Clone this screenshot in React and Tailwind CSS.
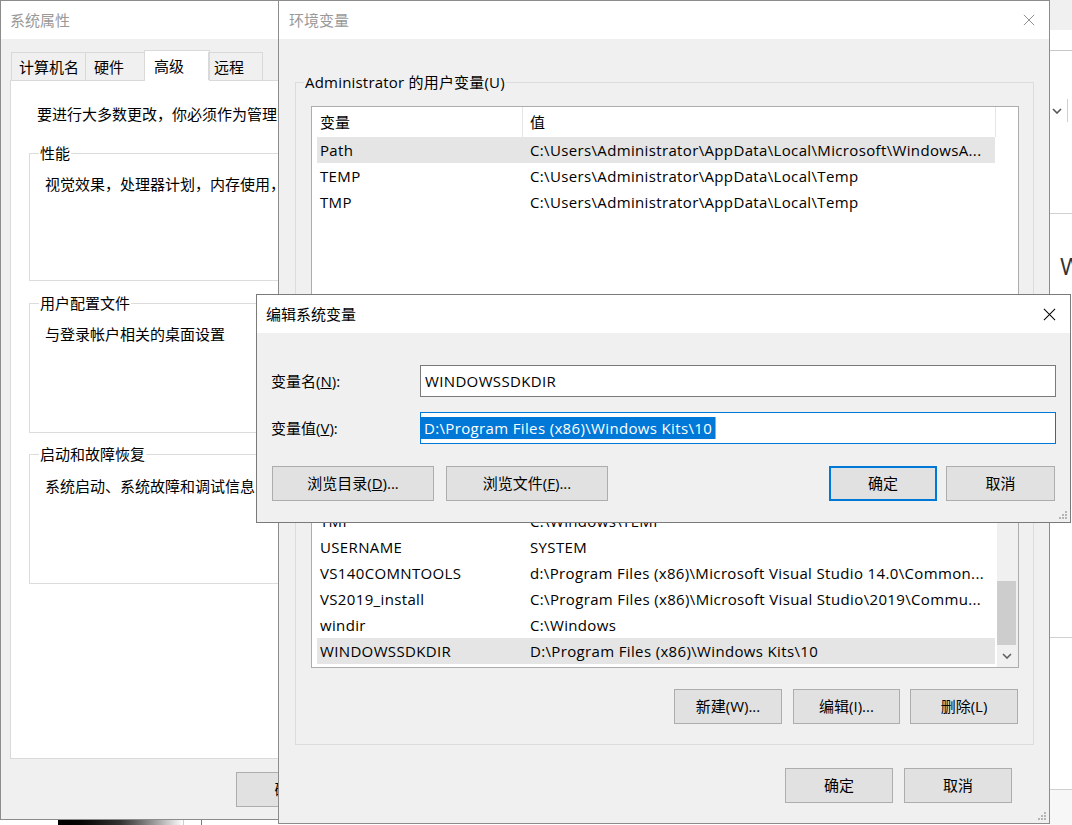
import React from 'react';

const Btn = ({ className = '', primary = false, children }) => (
  <div
    className={`flex h-[35px] items-center justify-center bg-[#e1e1e1] text-[15px] leading-none text-black ${
      primary ? 'border-2 border-[#0078d7]' : 'border border-[#adadad]'
    } ${className}`}
  >
    {children}
  </div>
);

const CloseIcon = ({ className }) => (
  <svg viewBox="0 0 14 14" className={className} fill="none" stroke="currentColor" strokeWidth="1.1">
    <path d="M1 1 13 13M13 1 1 13" />
  </svg>
);

const Chevron = ({ className }) => (
  <svg viewBox="0 0 10 6" className={className} fill="none" stroke="currentColor" strokeWidth="1.6">
    <path d="M1 1l4 4 4-4" />
  </svg>
);

const Grip = ({ className }) => (
  <svg viewBox="0 0 9 9" className={className}>
    <g fill="#b5b5b5">
      <rect x="7" y="1" width="2" height="2" />
      <rect x="4" y="4" width="2" height="2" />
      <rect x="7" y="4" width="2" height="2" />
      <rect x="1" y="7" width="2" height="2" />
      <rect x="4" y="7" width="2" height="2" />
      <rect x="7" y="7" width="2" height="2" />
    </g>
  </svg>
);

// one row of a list view: name column + value column
const VarRow = ({ name, value, selected }) => (
  <div
    className={`ml-[5px] flex h-[26px] w-[678px] shrink-0 items-center whitespace-nowrap tracking-[0.35px] ${
      selected ? 'bg-[#e5e5e5]' : ''
    }`}
  >
    <div className="w-[205px] overflow-hidden pl-[3px]">{name}</div>
    <div className="flex-1 overflow-hidden pl-[8px]">{value}</div>
  </div>
);

const userVars = [
  { name: 'Path', value: 'C:\\Users\\Administrator\\AppData\\Local\\Microsoft\\WindowsA...', selected: true },
  { name: 'TEMP', value: 'C:\\Users\\Administrator\\AppData\\Local\\Temp' },
  { name: 'TMP', value: 'C:\\Users\\Administrator\\AppData\\Local\\Temp' },
];

const sysVars = [
  { name: 'OS', value: 'Windows_NT' },
  { name: 'PROCESSOR_ARCHITECTURE', value: 'AMD64' },
  { name: 'PROCESSOR_LEVEL', value: '6' },
  { name: 'PSModulePath', value: '%ProgramFiles%\\WindowsPowerShell\\Modules' },
  { name: 'TEMP', value: 'C:\\Windows\\TEMP' },
  { name: 'TMP', value: 'C:\\Windows\\TEMP' },
  { name: 'USERNAME', value: 'SYSTEM' },
  { name: 'VS140COMNTOOLS', value: 'd:\\Program Files (x86)\\Microsoft Visual Studio 14.0\\Common...' },
  { name: 'VS2019_install', value: 'C:\\Program Files (x86)\\Microsoft Visual Studio\\2019\\Commu...' },
  { name: 'windir', value: 'C:\\Windows' },
  { name: 'WINDOWSSDKDIR', value: 'D:\\Program Files (x86)\\Windows Kits\\10', selected: true },
];

const SystemProperties = () => (
  <div className="absolute left-0 top-0 z-10 flex h-[820px] w-[300px] flex-col border border-[#8c8c8c] bg-[#f0f0f0]">
    <div className="flex h-[38px] shrink-0 items-center bg-white pl-[9px] text-[15px] text-[#999]">系统属性</div>
    <div className="flex flex-col pl-[9px]">
      {/* Tabs */}
      <div className="relative z-10 flex items-end pl-px pt-[11px]">
        <div className="flex h-[28px] w-[75px] items-center border border-b-0 border-[#d9d9d9] pl-[7px] pt-[2px]">计算机名</div>
        <div className="-ml-px flex h-[28px] w-[61px] items-center border border-b-0 border-[#d9d9d9] pl-[8px] pt-[2px]">硬件</div>
        <div className="-mb-px -ml-[2px] flex h-[31px] w-[66px] items-center border border-b-0 border-[#d9d9d9] bg-white pl-[9px]">高级</div>
        <div className="-ml-[2px] flex h-[28px] w-[55px] items-center border border-b-0 border-[#d9d9d9] pl-[5px] pt-[2px]">远程</div>
      </div>
      {/* Tab panel */}
      <div className="flex h-[679px] flex-col border border-[#d9d9d9] bg-white">
        <div className="whitespace-nowrap pl-[26px] pt-[23px] leading-[20px]">要进行大多数更改，你必须作为管理员登录。</div>
        <fieldset className="ml-[18px] mt-[19px] h-[138px] w-[400px] border border-[#dcdcdc]">
          <legend className="ml-[9px] px-px leading-[20px]">性能</legend>
          <div className="whitespace-nowrap pl-[15px] pt-[11px] leading-[20px]">视觉效果，处理器计划，内存使用，以及虚拟内存</div>
        </fieldset>
        <fieldset className="ml-[18px] mt-[12px] h-[140px] w-[400px] border border-[#dcdcdc]">
          <legend className="ml-[9px] px-px leading-[20px]">用户配置文件</legend>
          <div className="whitespace-nowrap pl-[15px] pt-[11px] leading-[20px]">与登录帐户相关的桌面设置</div>
        </fieldset>
        <fieldset className="ml-[18px] mt-[11px] h-[140px] w-[400px] border border-[#dcdcdc]">
          <legend className="ml-[9px] px-px leading-[20px]">启动和故障恢复</legend>
          <div className="whitespace-nowrap pl-[15px] pt-[12px] leading-[20px]">系统启动、系统故障和调试信息</div>
        </fieldset>
      </div>
      <div className="pl-[226px] pt-[13px]">
        <Btn className="w-[107px]">确定</Btn>
      </div>
    </div>
  </div>
);

const EnvironmentVariables = () => (
  <div className="absolute left-[278px] top-0 z-20 flex h-[824px] w-[772px] flex-col border border-[#8c8c8c] bg-[#f0f0f0]">
    <div className="flex h-[38px] shrink-0 items-center justify-between bg-white pl-[10px] pr-[14px] text-[15px] text-[#999]">
      <span>环境变量</span>
      <CloseIcon className="h-[12px] w-[12px] text-[#8a8a8a]" />
    </div>

    {/* User variables */}
    <fieldset className="ml-[16px] mt-[33px] w-[739px] border border-[#dcdcdc]">
      <legend className="ml-[8px] px-px leading-[20px] tracking-[0.2px]">Administrator 的用户变量(U)</legend>
      <div className="ml-[15px] mt-[14px] flex h-[190px] w-[708px] flex-col border border-[#adadad] bg-white">
        <div className="flex h-[30px] shrink-0 items-center">
          <div className="w-[210px] pl-[8px]">变量</div>
          <div className="h-full w-px bg-[#e5e5e5]" />
          <div className="w-[472px] pl-[7px]">值</div>
          <div className="h-full w-px bg-[#e5e5e5]" />
        </div>
        {userVars.map((v) => (
          <VarRow key={v.name} {...v} />
        ))}
      </div>
      <div className="flex justify-end pb-[20px] pr-[15px] pt-[20px]">
        <Btn className="w-[108px]">新建(N)...</Btn>
        <Btn className="ml-[11px] w-[107px]">编辑(E)...</Btn>
        <Btn className="ml-[10px] w-[108px]">删除(D)</Btn>
      </div>
    </fieldset>

    {/* System variables */}
    <fieldset className="ml-[16px] mt-[6px] w-[739px] border border-[#dcdcdc]">
      <legend className="ml-[8px] px-px leading-[20px]">系统变量(S)</legend>
      <div className="ml-[15px] mt-[12px] flex h-[258px] w-[708px] border border-[#adadad] bg-white">
        <div className="flex w-[685px] flex-col justify-end overflow-hidden pb-[3px]">
          {sysVars.map((v) => (
            <VarRow key={v.name} {...v} />
          ))}
        </div>
        <div className="flex w-[21px] flex-col bg-[#f0f0f0] pr-[2px]">
          <div className="flex-1" />
          <div className="h-[64px] bg-[#cdcdcd]" />
          <div className="flex h-[22px] items-center justify-center">
            <Chevron className="h-[6px] w-[10px] text-[#606060]" />
          </div>
        </div>
      </div>
      <div className="flex justify-end pb-[20px] pr-[15px] pt-[21px]">
        <Btn className="w-[108px]">新建(W)...</Btn>
        <Btn className="ml-[11px] w-[107px]">编辑(I)...</Btn>
        <Btn className="ml-[10px] w-[108px]">删除(L)</Btn>
      </div>
    </fieldset>

    <div className="flex justify-end pr-[37px] pt-[23px]">
      <Btn className="w-[108px]">确定</Btn>
      <Btn className="ml-[11px] w-[108px]">取消</Btn>
    </div>
    <Grip className="absolute bottom-[3px] right-[3px] h-[9px] w-[9px]" />
  </div>
);

const EditVariable = () => (
  <div className="absolute left-[256px] top-[294px] z-30 flex h-[229px] w-[815px] flex-col border border-[#7a7a7a] bg-[#f0f0f0]">
    <div className="flex h-[38px] shrink-0 items-center justify-between bg-white pl-[9px] pr-[14px] text-[15px] text-black">
      <span>编辑系统变量</span>
      <CloseIcon className="h-[13px] w-[13px] text-black" />
    </div>
    <div className="flex items-center pl-[14px] pt-[32px]">
      <div className="w-[149px]">
        变量名(<span className="underline">N</span>):
      </div>
      <div className="flex h-[32px] w-[636px] items-center border border-[#7a7a7a] bg-white pl-[4px] tracking-[0.35px]">WINDOWSSDKDIR</div>
    </div>
    <div className="flex items-center pl-[14px] pt-[15px]">
      <div className="w-[149px]">
        变量值(<span className="underline">V</span>):
      </div>
      <div className="flex h-[32px] w-[636px] items-center border border-[#0078d7] bg-white">
        <span className="bg-[#0078d7] px-[3px] leading-[22px] tracking-[0.35px] text-white">D:\Program Files (x86)\Windows Kits\10</span>
        <span className="h-[22px] w-px bg-[#f39c3c]" />
      </div>
    </div>
    <div className="flex items-center pl-[15px] pr-[15px] pt-[22px]">
      <Btn className="w-[162px]">
        浏览目录(<span className="underline">D</span>)...
      </Btn>
      <Btn className="ml-[12px] w-[162px]">
        浏览文件(<span className="underline">F</span>)...
      </Btn>
      <Btn primary className="ml-auto w-[108px]">确定</Btn>
      <Btn className="ml-[9px] w-[109px]">取消</Btn>
    </div>
    <Grip className="absolute bottom-[3px] right-[3px] h-[9px] w-[9px]" />
  </div>
);

// the bits of other windows peeking out on the desktop
const Backdrop = () => (
  <>
    <div className="absolute left-[1049px] top-0 flex h-[825px] w-[23px] flex-col bg-white">
      <div className="h-[30px] shrink-0 bg-[#f0f0f0]" />
      <div className="h-[21px] shrink-0 border-b border-[#c8c8c8]" />
      <div className="h-[48px] shrink-0" />
      <div className="flex h-[23px] shrink-0 items-center pl-[3px]">
        <Chevron className="h-[6px] w-[10px] text-[#555]" />
        <div className="ml-auto mr-[4px] h-full w-px bg-[#d0d0d0]" />
      </div>
      <div className="h-[92px] shrink-0 border-b border-[#d0d0d0]" />
      <div className="pl-[11px] pt-[40px] text-[24px] leading-none text-[#333]">W</div>
      <div className="mt-auto h-[152px] shrink-0 border-t border-[#d0d0d0]" />
      <div className="h-[36px] shrink-0 border-t border-[#d0d0d0] bg-[#f7f7f7]" />
    </div>
    <div className="absolute left-[58px] top-[819px] h-[6px] w-[125px] bg-gradient-to-r from-black via-[#333] to-white" />
    <div className="absolute left-[183px] top-[819px] h-[6px] w-px bg-[#cccccc]" />
    <div className="absolute left-[201px] top-[819px] h-[6px] w-px bg-[#3b82f6]" />
  </>
);

export default function App() {
  return (
    <div className="relative h-[825px] w-[1072px] overflow-hidden bg-white font-['Open_Sans','Noto_Sans_CJK_SC',sans-serif] text-[15px] text-black">
      <Backdrop />
      <SystemProperties />
      <EnvironmentVariables />
      <EditVariable />
    </div>
  );
}
